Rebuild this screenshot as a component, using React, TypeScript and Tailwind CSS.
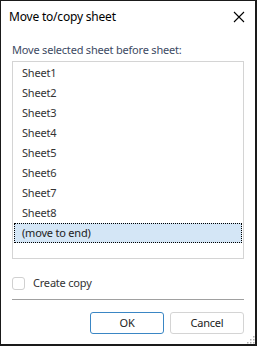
import React from "react";

const sheets = ["Sheet1", "Sheet2", "Sheet3", "Sheet4", "Sheet5", "Sheet6", "Sheet7", "Sheet8"];

export default function App() {
  return (
    <div
      className="w-[257px] h-[346px] bg-white border border-[#1a1a1a] border-r-2 border-b-2 relative flex flex-col tracking-[-0.2px]"
      style={{ fontFamily: '"Noto Sans", "Open Sans", sans-serif' }}
    >
      <div className="h-[32px] flex items-center justify-between pl-[8px] pr-[10px]">
        <span className="text-[12px] text-black">Move to/copy sheet</span>
        <svg width="12" height="12" viewBox="0 0 12 12">
          <path d="M1 1 L11 11 M11 1 L1 11" stroke="#000" strokeWidth="1.1" />
        </svg>
      </div>
      <div className="px-[11px] flex flex-col">
        <div className="mt-[9px] text-[11px] leading-[16px] text-[#3d4a63]">Move selected sheet before sheet:</div>
        <div className="mt-[3px] h-[198px] border border-[#d4d4d4] pt-[1px] px-[1px]">
          {sheets.map((s) => (
            <div key={s} className="h-[20px] flex items-center pl-[8px] text-[11px] text-[#333]">
              {s}
            </div>
          ))}
          <div className="h-[20px] flex items-center pl-[7px] text-[11px] text-[#222] bg-[#d4e6f6] border border-dotted border-black">
            (move to end)
          </div>
        </div>
        <div className="mt-[16px] h-[16px] flex items-center gap-[8px]">
          <div className="w-[13px] h-[13px] border border-[#d0d0d0] rounded-[3px]" />
          <span className="text-[11px] text-[#333]">Create copy</span>
        </div>
        <div className="mt-[8px] h-px bg-[#a0a0a0]" />
        <div className="mt-[12px] flex justify-end gap-[6px]">
          <div className="w-[74px] h-[22px] border border-[#3a86c4] rounded-[3px] flex items-center justify-center text-[11px] text-[#222]">
            OK
          </div>
          <div className="w-[74px] h-[22px] border border-[#d4d4d4] rounded-[3px] flex items-center justify-center text-[11px] text-[#222]">
            Cancel
          </div>
        </div>
      </div>
      <svg width="10" height="10" viewBox="0 0 10 10" className="absolute right-[0px] bottom-[0px]">
        {[
          [8, 2],
          [8, 5],
          [5, 5],
          [8, 8],
          [5, 8],
          [2, 8],
        ].map(([x, y], i) => (
          <rect key={i} x={x} y={y} width="1.5" height="1.5" fill="#b0b0b0" />
        ))}
      </svg>
    </div>
  );
}
